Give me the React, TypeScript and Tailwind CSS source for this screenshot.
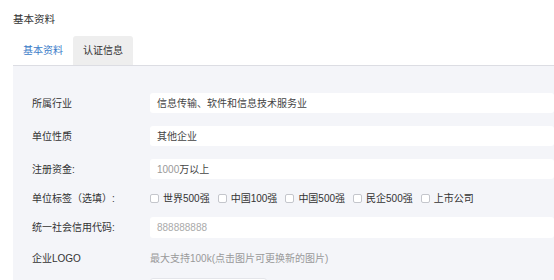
import React from "react";

const TAGS = ["世界500强", "中国100强", "中国500强", "民企500强", "上市公司"];

function Field({ label, children, h = "h-5" }: { label: string; children: React.ReactNode; h?: string }) {
  return (
    <div className={`flex items-center shrink-0 ${h}`}>
      <div className="w-[118px] shrink-0 text-[10px] text-[#333]">{label}</div>
      <div className="flex-1 h-full flex items-center">{children}</div>
    </div>
  );
}

function Input({ children, muted }: { children: React.ReactNode; muted?: boolean }) {
  return (
    <div
      className={`w-full h-full bg-white rounded-[3px] flex items-center pl-[7px] text-[10px] ${
        muted ? "text-[#aaa]" : "text-[#444]"
      }`}
    >
      {children}
    </div>
  );
}

const Gap = () => <div className="h-[13px] shrink-0" />;

export default function App() {
  return (
    <div
      className="w-[554px] h-[280px] bg-white overflow-hidden"
      style={{ fontFamily: '"Liberation Sans", "Noto Sans CJK SC", sans-serif' }}
    >
      <div className="pl-[13px] pt-[12px] h-[36px] text-[10.5px] text-[#333]">基本资料</div>

      <div className="ml-[13px] flex h-[30px] border-b border-[#dcdde3]">
        <div className="w-[60px] flex items-center justify-center text-[10px] text-[#3a7bc8]">基本资料</div>
        <div className="w-[60px] flex items-center justify-center text-[10px] text-[#333] bg-[#eeeeee] rounded-t-[3px]">
          认证信息
        </div>
      </div>

      <div className="ml-[13px] bg-[#f4f5f9] h-[214px] overflow-hidden pl-[19px] pt-[27px] flex flex-col">
        <Field label="所属行业">
          <Input>信息传输、软件和信息技术服务业</Input>
        </Field>
        <Gap />
        <Field label="单位性质">
          <Input>其他企业</Input>
        </Field>
        <Gap />
        <Field label="注册资金:">
          <Input>
            <span className="text-[#999]">1000</span>万以上
          </Input>
        </Field>
        <Gap />
        <Field label="单位标签（选填）:" h="h-[12px]">
          <div className="flex items-center gap-[8px]">
            {TAGS.map((t) => (
              <label key={t} className="flex items-center gap-[4px] text-[10px] text-[#333]">
                <span className="w-[9px] h-[9px] bg-white border border-[#c4c6cc] rounded-[2px]" />
                {t}
              </label>
            ))}
          </div>
        </Field>
        <Gap />
        <Field label="统一社会信用代码:" h="h-[21px]">
          <Input muted>888888888</Input>
        </Field>
        <Gap />
        <Field label="企业LOGO" h="h-[14px]">
          <div className="text-[10px] text-[#999]">最大支持100k(点击图片可更换新的图片)</div>
        </Field>
        <Gap />
        <div className="pl-[118px] shrink-0">
          <div className="w-[117px] h-[40px] bg-white rounded-[3px] border border-[#e4e5ea]" />
        </div>
      </div>
    </div>
  );
}
